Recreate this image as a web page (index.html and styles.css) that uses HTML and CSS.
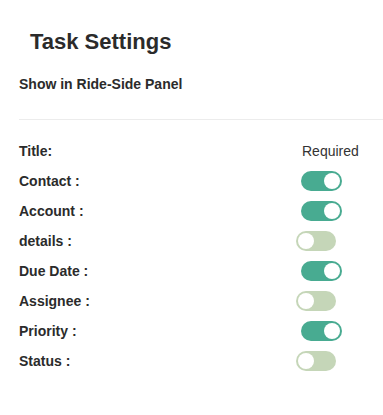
FILE: index.html
```html
<!DOCTYPE html>
<html lang="en">
<head>
    <meta charset="UTF-8">
    <meta name="viewport" content="width=device-width, initial-scale=1.0">
    <title>Task Settings</title>
    <link rel="stylesheet" href="styles.css">
</head>
<body>
    <div class="settings">
        <h2 class="settings-title">Task Settings</h2>
        <p class="section-label">Show in Ride-Side Panel</p>
        <hr class="divider">

        <div class="field-list">
            <div class="field-row">
                <span class="field-name">Title:</span>
                <span class="field-required">Required</span>
            </div>
            <div class="field-row">
                <span class="field-name">Contact :</span>
                <span class="switch on"><span class="knob"></span></span>
            </div>
            <div class="field-row">
                <span class="field-name">Account :</span>
                <span class="switch on"><span class="knob"></span></span>
            </div>
            <div class="field-row">
                <span class="field-name">details :</span>
                <span class="switch"><span class="knob"></span></span>
            </div>
            <div class="field-row">
                <span class="field-name">Due Date :</span>
                <span class="switch on"><span class="knob"></span></span>
            </div>
            <div class="field-row">
                <span class="field-name">Assignee :</span>
                <span class="switch"><span class="knob"></span></span>
            </div>
            <div class="field-row">
                <span class="field-name">Priority :</span>
                <span class="switch on"><span class="knob"></span></span>
            </div>
            <div class="field-row">
                <span class="field-name">Status :</span>
                <span class="switch"><span class="knob"></span></span>
            </div>
        </div>
    </div>
</body>
</html>
```

FILE: styles.css
```css
* { margin: 0; padding: 0; box-sizing: border-box; }
body {
    font-family: 'Liberation Sans', Arial, sans-serif;
    background: #fff;
    color: #333;
}
.settings {
    padding: 28px 0 0 19px;
}
.settings-title {
    font-size: 22px;
    font-weight: bold;
    color: #2b2b2b;
    padding-left: 11px;
    line-height: 28px;
}
.section-label {
    font-size: 14px;
    font-weight: bold;
    color: #2b2b2b;
    margin-top: 19px;
    line-height: 18px;
}
.divider {
    border: none;
    border-top: 1px solid #ececec;
    margin-top: 26px;
}
.field-list {
    margin-top: 16px;
}
.field-row {
    display: flex;
    align-items: center;
    height: 30px;
}
.field-name {
    width: 277px;
    font-size: 14px;
    font-weight: bold;
    color: #2b2b2b;
}
.field-required {
    padding-left: 6px;
    font-size: 14px;
    color: #333;
}
.switch {
    position: relative;
    display: inline-block;
    width: 40px;
    height: 20px;
    border-radius: 10px;
    background: #c5d6b8;
}
.switch .knob {
    position: absolute;
    top: 2px;
    left: 2px;
    width: 16px;
    height: 16px;
    border-radius: 50%;
    background: #fff;
}
.switch.on {
    background: #48ab91;
    margin-left: 5px;
    width: 41px;
}
.switch.on .knob {
    left: auto;
    right: 2px;
}
```
